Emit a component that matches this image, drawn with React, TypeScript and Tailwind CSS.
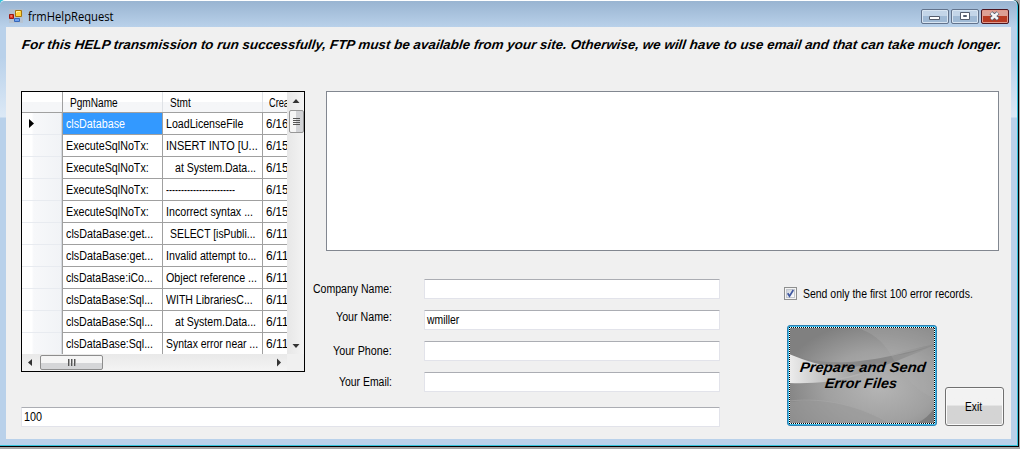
import { useLayoutEffect, useRef, useState } from "react";
import clsx from "clsx";

type TextProps = { children: string; width: number; className?: string };

/* A single line of text fitted horizontally to a given width. */
function Fit({ children, width, className }: TextProps) {
  const ref = useRef<HTMLSpanElement>(null);
  const [scale, setScale] = useState(1);
  useLayoutEffect(() => {
    if (ref.current) setScale(width / ref.current.offsetWidth);
  }, [width, children]);
  return (
    <span className={clsx("block h-4 shrink-0 whitespace-pre leading-4", className)} style={{ width }}>
      <span ref={ref} className="inline-block origin-left" style={{ transform: `scaleX(${scale})` }}>
        {children}
      </span>
    </span>
  );
}

type Row = { pgm: string; pw: number; stmt: string; sw: number; indent?: string; date: string };

const rows: Row[] = [
  { pgm: "clsDatabase", pw: 59, stmt: "LoadLicenseFile", sw: 77, date: "6/16" },
  { pgm: "ExecuteSqlNoTx:", pw: 83, stmt: "INSERT INTO [U...", sw: 92, date: "6/15" },
  { pgm: "ExecuteSqlNoTx:", pw: 83, stmt: "at System.Data...", sw: 81, indent: "pl-[9px]", date: "6/15" },
  { pgm: "ExecuteSqlNoTx:", pw: 83, stmt: "-----------------------", sw: 69, date: "6/15" },
  { pgm: "ExecuteSqlNoTx:", pw: 83, stmt: "Incorrect syntax ...", sw: 87, date: "6/15" },
  { pgm: "clsDataBase:get...", pw: 87, stmt: "SELECT [isPubli...", sw: 85, indent: "pl-[4px]", date: "6/11" },
  { pgm: "clsDataBase:get...", pw: 87, stmt: "Invalid attempt to...", sw: 90, date: "6/11" },
  { pgm: "clsDataBase:iCo...", pw: 87, stmt: "Object reference ...", sw: 91, date: "6/11" },
  { pgm: "clsDataBase:Sql...", pw: 87, stmt: "WITH LibrariesC...", sw: 87, date: "6/11" },
  { pgm: "clsDataBase:Sql...", pw: 87, stmt: "at System.Data...", sw: 81, indent: "pl-[9px]", date: "6/11" },
  { pgm: "clsDataBase:Sql...", pw: 87, stmt: "Syntax error near ...", sw: 92, date: "6/11" },
];

function DataGrid() {
  return (
    <div className="col-start-1 row-span-2 row-start-1 flex h-[281px] w-[284px] flex-col border border-black bg-[#f0f0f0]">
      <div className="flex h-[262px]">
        <div className="h-full w-[265px] overflow-hidden bg-white">
          <div className="flex h-[21px] w-[340px] border-b border-[#a0a0a0] bg-gradient-to-b from-white from-50% to-[#f5f6f8] to-50%">
            <div className="w-[41px] border-r border-[#a0a0a0]" />
            <div className="w-[100px] border-r border-[#dfe2e6] pl-[7px] pt-[3px]"><Fit width={48}>PgmName</Fit></div>
            <div className="w-[100px] border-r border-[#dfe2e6] pl-[7px] pt-[3px]"><Fit width={21}>Stmt</Fit></div>
            <div className="pl-[6px] pt-[3px]"><Fit width={20}>Crea</Fit></div>
          </div>
          {rows.map((r, i) => (
            <div key={i} className="flex h-[22px] w-[340px]">
              <div className="flex w-[41px] items-center border-r border-[#a0a0a0] bg-white">
                <div className="flex h-full w-[39px] items-center border-b border-[#e8ebf0] bg-gradient-to-r from-white from-25% via-[#f7f8fa] via-30% to-[#f1f3f6]">
                  {i === 0 && (
                    <svg width="5" height="9" viewBox="0 0 5 9" className="ml-[7px]"><path d="M0 0L5 4.5L0 9Z" /></svg>
                  )}
                </div>
                <div className="h-full w-px border-r border-[#d5d9df]" />
              </div>
              <div className={clsx("w-[100px] border-b border-r border-[#a0a0a0] pl-[3px] pt-[3px]", i === 0 && "bg-[#3399ff] text-white")}>
                <Fit width={r.pw}>{r.pgm}</Fit>
              </div>
              <div className="w-[100px] border-b border-r border-[#a0a0a0] pl-[3px] pt-[3px]">
                <div className={r.indent}><Fit width={r.sw}>{r.stmt}</Fit></div>
              </div>
              <div className="w-[99px] border-b border-[#a0a0a0] pl-[3px] pt-[3px]"><Fit width={22}>{r.date}</Fit></div>
            </div>
          ))}
        </div>
        <div className="flex h-full w-[17px] flex-col items-center bg-gradient-to-r from-[#e7e7e7] to-[#f3f3f3] pl-px">
          <svg width="16" height="18" viewBox="0 0 16 18"><path d="M4.5 11L8 7L11.5 11Z" fill="#333" /></svg>
          <div className="flex h-[23px] w-[15px] flex-col items-center justify-center gap-px rounded-[2px] border border-[#979797] bg-gradient-to-r from-[#f5f5f5] from-50% to-[#d2d3d6] to-50% pb-px">
            {[0, 1, 2, 3].map((n) => <div key={n} className="h-px w-[7px] bg-[#555]" />)}
          </div>
          <div className="grow" />
          <svg width="16" height="17" viewBox="0 0 16 17"><path d="M4.5 7L8 11L11.5 7Z" fill="#333" /></svg>
        </div>
      </div>
      <div className="flex h-[17px] items-center">
        <div className="flex h-full w-[265px] items-center bg-gradient-to-b from-[#e9e9e9] to-[#f4f4f4]">
          <svg width="18" height="15" viewBox="0 0 18 15"><path d="M10 4V11L6 7.5Z" fill="#333" /></svg>
          <div className="flex h-[15px] w-[63px] items-center justify-center gap-px rounded-[2px] border border-[#8d8d8d] bg-gradient-to-b from-[#f5f5f5] from-50% to-[#d5d6d8] to-50%">
            {[0, 1, 2].map((n) => <div key={n} className="h-[7px] w-0.5 border-r border-[#aaa] bg-[#555]" />)}
          </div>
          <div className="grow" />
          <svg width="18" height="15" viewBox="0 0 18 15"><path d="M8 3.5V11.5L12 7.5Z" fill="#333" /></svg>
        </div>
      </div>
    </div>
  );
}

function TextBox({ value, width, className }: { value?: string; width?: number; className?: string }) {
  return (
    <div className={clsx("h-5 shrink-0 rounded-[1px] border border-[#e2e3ea] border-t-[#abadb3] bg-white pl-[2px] pt-px", className)}>
      {value && <Fit width={width ?? 20}>{value}</Fit>}
    </div>
  );
}

const fields = [
  { label: "Company Name:", w: 79, pad: "pt-[2px]" },
  { label: "Your Name:", w: 56, pad: "-mt-px", value: "wmiller" },
  { label: "Your Phone:", w: 59, pad: "pt-[2px]" },
  { label: "Your Email:", w: 53, pad: "pt-[2px]" },
];

function Actions() {
  return (
    <div className="col-start-3 row-span-2 row-start-2 flex flex-col pl-16 pt-4">
      <div className="flex h-[13px] items-center">
        <div className="size-[13px] border border-[#8e8f8f] bg-[#f4f4f4] p-px">
          <div className="size-[9px] border border-[#c2c6cd] bg-gradient-to-br from-[#cdd2da] to-white">
            <svg width="9" height="9" viewBox="0 0 9 9" className="-ml-px -mt-px"><path d="M1.7 4.2L3.5 7.2L7.3 1" stroke="#3f57a0" strokeWidth="1.7" fill="none" /></svg>
          </div>
        </div>
        <Fit width={170} className="ml-[6px]">Send only the first 100 error records.</Fit>
      </div>
      <div className="ml-[3px] mt-[25px] flex items-end gap-2">
        <button className="grid h-[101px] w-[150px] place-items-center rounded-[3px] border border-[#2f7fb0] bg-[#3ebdea] p-px">
          <svg width="146" height="97" viewBox="0 0 146 97" className="col-start-1 row-start-1">
            <defs>
              <radialGradient id="glow" cx="0.62" cy="0.62" r="0.68">
                <stop offset="0" stopColor="#b5b5b5" />
                <stop offset="0.55" stopColor="#a0a0a0" />
                <stop offset="1" stopColor="#808080" />
              </radialGradient>
              <linearGradient id="sweep">
                <stop offset="0" stopColor="#ededed" />
                <stop offset="0.3" stopColor="#c6c6c6" />
                <stop offset="1" stopColor="#a5a5a5" stopOpacity="0" />
              </linearGradient>
              <linearGradient id="shade">
                <stop offset="0" stopColor="#777" stopOpacity="0" />
                <stop offset="0.55" stopColor="#868686" />
                <stop offset="1" stopColor="#8e8e8e" />
              </linearGradient>
            </defs>
            <path d="M0 0H146V97H0Z" fill="url(#glow)" />
            <path d="M65 0C83 5 94 14 102 28C119 23 132 20 146 17V0Z" fill="#acacac" opacity=".35" />
            <path d="M0 27C38 40 75 38 146 18C105 36 77 46 44 53L0 48Z" fill="url(#shade)" />
            <path d="M0 27C17 34 35 40 57 41L107 34C82 47 45 58 0 56Z" fill="url(#sweep)" />
            <path d="M102 28C111 46 125 63 146 72V18C129 24 115 29 102 28Z" fill="#b0b0b0" opacity=".25" />
            <path d="M0 75C38 70 70 79 103 97H0Z" fill="#999" opacity=".6" />
            <path d="M0 74C38 70 70 79 103 97" fill="none" stroke="#a6a6a6" strokeOpacity=".6" />
            <path d="M126 97C135 93 141 88 146 80V97Z" fill="#7d7d7d" />
            <path d="M.5 .5H145.5V96.5H.5Z" fill="none" stroke="white" />
            <path d="M0 .5H146M0 96.5H146M.5 0V97M145.5 1V97" fill="none" stroke="black" strokeDasharray="1 1" />
          </svg>
          <span className="z-10 col-start-1 row-start-1 mb-px mr-[4px] flex flex-col items-center text-[14px] font-bold italic">
            <Fit width={126} className="-skew-x-[7deg]">Prepare and Send</Fit>
            <Fit width={72} className="-skew-x-[7deg]">Error Files</Fit>
          </span>
        </button>
        <button className="flex h-[39px] w-[59px] items-center justify-center rounded-[3px] border border-[#707070] bg-gradient-to-b from-[#f2f2f2] from-45% to-[#d4d4d4] to-50% pr-[3px] shadow-[inset_0_0_0_1px_#fafafa]">
          <Fit width={17}>Exit</Fit>
        </button>
      </div>
    </div>
  );
}

const chrome = "h-[15px] w-7 rounded-[2px] border border-[#63738c] bg-gradient-to-b from-[#c3d5e8] from-50% to-[#a0bad5] to-50% shadow-[inset_0_0_0_1px_#d8e5f2]";

function TitleBar() {
  return (
    <div className="flex h-[26px] items-start bg-gradient-to-b from-[#99b4d1] to-[#b9d1ea]">
      <svg width="14" height="14" viewBox="0 0 14 14" className="ml-[9px] mt-2">
        <path d="M0 0H14V14H0Z" fill="#b9bec5" opacity=".6" />
        <path d="M.5 5.5H4.5V9.5H.5Z" fill="#e23d25" stroke="#9b1710" />
        <path d="M1.5 7H3" stroke="#ffb0a0" />
        <path d="M6.5 1.5H12.5V7.5H6.5Z" fill="#ffd33d" stroke="#a5740a" />
        <path d="M7.5 4V2.5H11" stroke="#fff1a0" fill="none" />
        <path d="M5.5 9.5H10.5V12.5H5.5Z" fill="#6da0ef" stroke="#3566b8" />
      </svg>
      <Fit width={86} className="ml-[5px] mt-[8px] font-['Open_Sans',sans-serif] text-[12px]">frmHelpRequest</Fit>
      <div className="grow" />
      <div className="mr-[8px] mt-2 flex gap-[2px]">
        <div className={chrome}>
          <svg width="26" height="13" viewBox="0 0 26 13"><path d="M7.5 6.5H17.5V9.5H7.5Z" fill="#fff" stroke="#555d6c" /></svg>
        </div>
        <div className={chrome}>
          <svg width="26" height="13" viewBox="0 0 26 13"><path d="M8.5 2.5H17.5V9.5H8.5Z" fill="#fff" stroke="#555d6c" /><path d="M11.5 5.5H14.5V6.5H11.5Z" fill="#9db5cf" stroke="#555d6c" /></svg>
        </div>
        <div className="h-[15px] w-7 rounded-[2px] border border-[#4c1620] bg-gradient-to-b from-[#dda095] from-50% to-[#b83a22] to-50% shadow-[inset_0_0_0_1px_#e29a8c]">
          <svg width="26" height="13" viewBox="0 0 26 13">
            <path d="M9 2.7L16 9.3M16 2.7L9 9.3" stroke="#59606e" strokeWidth="4.2" />
            <path d="M9.2 3L15.8 9M15.8 3L9.2 9" stroke="#f6f6f6" strokeWidth="2.4" />
          </svg>
        </div>
      </div>
    </div>
  );
}

export default function App() {
  return (
    <div className="h-[449px] w-[1020px] overflow-hidden bg-[#a6a6a6] font-['Liberation_Sans',Arial,sans-serif] text-[12px] text-black">
      <div className="h-[447px] w-[1019px] rounded-tr-[6px] border-b border-r border-black bg-[#35c3dc] pb-px pr-px">
        <div className="h-[445px] w-[1017px] overflow-hidden rounded-t-[5px] border-t border-white bg-[#b9d1ea]">
          <TitleBar />
          <div className="flex h-[418px] bg-[linear-gradient(to_bottom,#b9d1ea_0px,#b9d1ea_30px,#dce9f6_90px,#b9d1ea_91px)] pl-[6px]">
            <div className="h-[412px] w-[1005px] bg-[#f0f0f0]">
              <div className="h-16 pl-4 pt-[10px]">
                <Fit width={980} className="-skew-x-[7deg] text-[13px] font-bold italic">For this HELP transmission to run successfully, FTP must be available from your site. Otherwise, we will have to use email and that can take much longer.</Fit>
              </div>
              <div className="grid grid-cols-[284px_415px_284px] grid-rows-[180px_136px_20px] pl-[15px]">
                <DataGrid />
                <div className="col-span-2 col-start-2 row-start-1 ml-[21px] h-40 w-[673px] border border-[#828790] bg-white" />
                <div className="col-start-2 row-start-2 flex flex-col gap-[11px] pt-2">
                  {fields.map((f) => (
                    <div key={f.label} className="flex h-5 items-start">
                      <div className={clsx("flex w-[87px] justify-end", f.pad)}><Fit width={f.w}>{f.label}</Fit></div>
                      <TextBox className="ml-8 w-[296px]" value={f.value} width={32} />
                    </div>
                  ))}
                </div>
                <TextBox className="col-span-2 col-start-1 row-start-3" value="100" width={18} />
                <Actions />
              </div>
            </div>
          </div>
        </div>
      </div>
    </div>
  );
}
